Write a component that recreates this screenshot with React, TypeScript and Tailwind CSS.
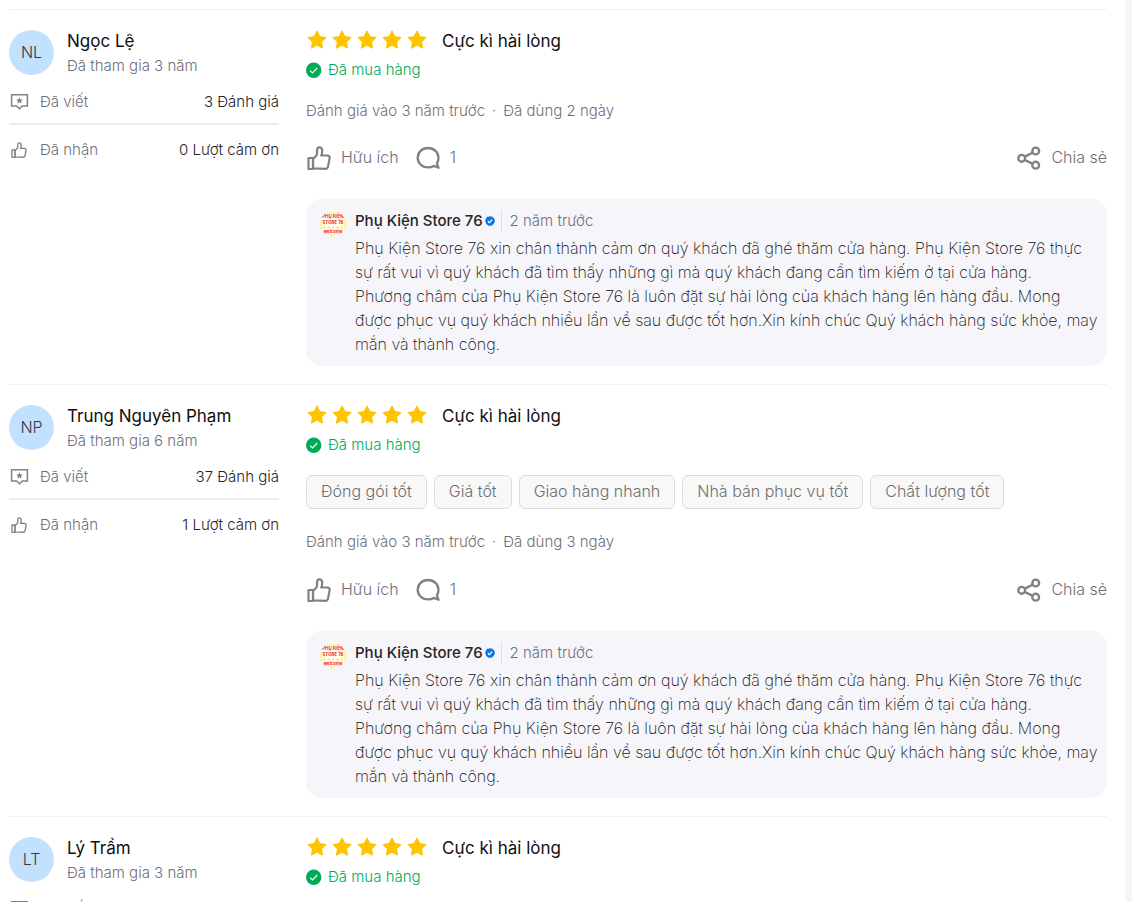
import React from 'react';

interface Review {
  initials: string;
  name: string;
  joined: string;
  written?: string;
  received?: string;
  used?: string;
  tags?: string[];
}

const reviews: Review[] = [
  {
    initials: 'NL',
    name: 'Ngọc Lệ',
    joined: 'Đã tham gia 3 năm',
    written: '3 Đánh giá',
    received: '0 Lượt cảm ơn',
    used: 'Đã dùng 2 ngày',
  },
  {
    initials: 'NP',
    name: 'Trung Nguyên Phạm',
    joined: 'Đã tham gia 6 năm',
    written: '37 Đánh giá',
    received: '1 Lượt cảm ơn',
    used: 'Đã dùng 3 ngày',
    tags: ['Đóng gói tốt', 'Giá tốt', 'Giao hàng nhanh', 'Nhà bán phục vụ tốt', 'Chất lượng tốt'],
  },
  {
    initials: 'LT',
    name: 'Lý Trầm',
    joined: 'Đã tham gia 3 năm',
  },
];

const replyText =
  'Phụ Kiện Store 76 xin chân thành cảm ơn quý khách đã ghé thăm cửa hàng. Phụ Kiện Store 76 thực sự rất vui vì quý khách đã tìm thấy những gì mà quý khách đang cần tìm kiếm ở tại cửa hàng.\nPhương châm của Phụ Kiện Store 76 là luôn đặt sự hài lòng của khách hàng lên hàng đầu. Mong được phục vụ quý khách nhiều lần về sau được tốt hơn.Xin kính chúc Quý khách hàng sức khỏe, may mắn và thành công.';

const StarIcon = () => (
  <svg viewBox="0 0 22 22" className="h-[22px] w-[22px]" aria-hidden="true">
    <path
      d="M11 1.2l2.7 5.6 6 .8-4.4 4.2 1.1 6.1L11 15l-5.4 2.9 1.1-6.1-4.4-4.2 6-.8z"
      fill="#ffc400"
      stroke="#ffc400"
      strokeWidth="1.4"
      strokeLinejoin="round"
    />
  </svg>
);

const ThumbIcon = ({ className, strokeWidth }: { className: string; strokeWidth: number }) => (
  <svg
    viewBox="0 0 24 24"
    className={className}
    fill="none"
    stroke="#808089"
    strokeWidth={strokeWidth}
    strokeLinejoin="round"
    aria-hidden="true"
  >
    <path d="M1.5 12H6v11H1.5z" />
    <path d="M6 13l3.2-3.3c.6-.7.9-1.6.9-2.6V4.1C10.1 2.4 11 1.4 12.4 1.4c1.8 0 2.8 1.4 2.8 3.5 0 1.6-.3 3.1-.9 4.6h6.1c1.6 0 2.5 1.1 2.2 2.6l-1.5 8.3c-.3 1.6-1.3 2.5-2.9 2.5L6 22.4z" />
  </svg>
);

const WrittenIcon = () => (
  <svg viewBox="0 0 20 20" className="h-5 w-5" fill="none" aria-hidden="true">
    <path d="M2.6 2.8h15.8V14h-5l-2.9 2.8L7.6 14h-5z" stroke="#808089" strokeWidth="1.5" />
    <path d="M10.5 5.3l1 2.1 2.3.2-1.7 1.6.5 2.3-2.1-1.2-2.1 1.2.5-2.3-1.7-1.6 2.3-.2z" fill="#808089" />
  </svg>
);

const CommentIcon = () => (
  <svg viewBox="0 0 24 24" className="h-6 w-6" fill="none" aria-hidden="true">
    <path
      d="M12 2C5.9 2 1.7 6.4 1.7 11.7S5.9 21.4 12 21.4c2.3 0 4.3-.5 5.9-1.5l4.7 1.9-1.7-4.4c1-1.6 1.6-3.5 1.6-5.7C22.5 6.4 18.1 2 12 2z"
      stroke="#808089"
      strokeWidth="2.3"
      strokeLinejoin="round"
    />
  </svg>
);

const ShareIcon = () => (
  <svg viewBox="0 0 24 24" className="h-6 w-6" fill="none" stroke="#808089" strokeWidth="2.4" aria-hidden="true">
    <circle cx="4.7" cy="12.3" r="3.4" />
    <circle cx="18.7" cy="5" r="3.4" />
    <circle cx="18.7" cy="19.2" r="3.4" />
    <path d="M7.9 10.6l7.6-3.9M7.9 14l7.6 3.6" />
  </svg>
);

const PurchasedIcon = () => (
  <svg viewBox="0 0 16 16" className="h-4 w-4" fill="none" aria-hidden="true">
    <circle cx="7.7" cy="8.3" r="7.7" fill="#00ab56" />
    <path d="M4 8.6l2.5 2.3L11.2 6" stroke="#fff" strokeWidth="1.1" />
  </svg>
);

const VerifiedIcon = () => (
  <svg viewBox="0 0 12 12" className="h-3 w-3" fill="none" aria-hidden="true">
    <path
      d="M6 1.1l1.3.6h1.5l.7 1.3 1.2.9-.2 1.5.6 1.2-1 1.2-.3 1.5-1.4.5-1 1.1-1.4-.3-1.4.3-1-1.1-1.4-.5-.3-1.5-.7-1.2.3-1.2-.2-1.5 1.2-.9.7-1.3h1.5z"
      fill="#0d74e7"
    />
    <path d="M3.9 6.2l1.5 1.4 2.7-3" stroke="#fff" strokeWidth="1.3" />
  </svg>
);

const StoreLogo = () => (
  <svg viewBox="0 0 26 26" className="h-[26px] w-[26px] shrink-0 rounded-full" role="img" aria-label="Phụ Kiện Store 76">
    <circle cx="13" cy="13" r="13" fill="#fff" />
    <path d="M1 2h24v20.5h-9.5l-4 3-.5-3H1z" fill="#fffef4" stroke="#fff04a" strokeWidth="1.2" />
    <g fill="#ee1c2e" fontFamily="Inter, sans-serif" fontWeight="700" textAnchor="middle">
      <text x="13" y="6.5" fontSize="4.6">PHỤ KIỆN</text>
      <text x="13" y="12.6" fontSize="4.4">STORE 76</text>
      <text x="13" y="22" fontSize="4.3">welcome</text>
    </g>
    <path
      d="M3 16.5h2M7.5 16.5h2M12 16.5h2M16.5 16.5h2M21 16.5h2"
      stroke="#ffe93a"
      strokeWidth="2"
    />
  </svg>
);

const Reviewer = ({ review }: { review: Review }) => (
  <div className="w-[270px] shrink-0">
    <div className="flex gap-[13px]">
      <div className="flex h-[45px] w-[45px] shrink-0 items-center justify-center rounded-full bg-[#c2e1ff] pb-px text-base font-light text-[#38383d]">
        {review.initials}
      </div>
      <div>
        <div className="text-[17px] leading-[22px] text-[#0f0f0f]">{review.name}</div>
        <div className="mt-1 text-[15px] leading-5 font-light text-[#6f6f78]">{review.joined}</div>
      </div>
    </div>
    <div className="mt-[14px] flex h-6 items-center text-[15px] font-light text-[#6f6f78]">
      <WrittenIcon />
      <span className="ml-[11px]">Đã viết</span>
      <span className="ml-auto text-[#242424]">{review.written}</span>
    </div>
    {review.received && (
      <>
        <div className="mt-[9px] h-[2px] bg-[#ebebf0]" />
        <div className="mt-[13px] flex h-6 items-center text-[15px] font-light text-[#6f6f78]">
          <ThumbIcon className="mx-[2px] h-4 w-4" strokeWidth={2} />
          <span className="ml-[11px]">Đã nhận</span>
          <span className="ml-auto text-[#242424]">{review.received}</span>
        </div>
      </>
    )}
  </div>
);

const StoreReply = () => (
  <div className="mt-[27px] flex gap-[9px] rounded-2xl bg-[#f5f5fa] pt-[10px] pr-2 pb-[10px] pl-[14px]">
    <div className="pt-[2px]">
      <StoreLogo />
    </div>
    <div className="min-w-0 flex-1">
      <div className="flex h-6 items-center">
        <span className="text-[15px] font-medium text-[#242424]">Phụ Kiện Store 76</span>
        <span className="ml-px">
          <VerifiedIcon />
        </span>
        <span className="ml-[5px] border-l border-[#dddde3] pl-2 text-[15px] leading-[22px] font-light text-[#6f6f78]">
          2 năm trước
        </span>
      </div>
      <p className="mt-[3px] text-base leading-6 font-extralight whitespace-pre-line text-[#0f0f0f]">{replyText}</p>
    </div>
  </div>
);

const ReviewItem = ({ review }: { review: Review }) => (
  <article className="flex gap-[27px] border-t border-[#f0f0f2] pt-5 pb-[18px] last:pb-0">
    <Reviewer review={review} />
    <div className="min-w-0 flex-1">
      <div className="flex h-6 items-start">
        <div className="flex gap-[3px]" role="img" aria-label="5 sao">
          {[1, 2, 3, 4, 5].map((n) => (
            <StarIcon key={n} />
          ))}
        </div>
        <span className="ml-[14px] text-[17px] leading-[23px] text-[#0f0f0f]">Cực kì hài lòng</span>
      </div>
      <div className="mt-[5px] flex h-[22px] items-center gap-[6px] text-[15px] font-light text-[#00ab56]">
        <PurchasedIcon />
        Đã mua hàng
      </div>
      {review.tags && (
        <div className="mt-[19px] mb-[21px] flex flex-wrap gap-[7px]">
          {review.tags.map((tag) => (
            <span
              key={tag}
              className="flex h-[34px] items-center rounded-md border border-[#dddddd] bg-[#f8f8f8] px-[14px] pb-[2px] text-base font-light text-[#6f6f6f]"
            >
              {tag}
            </span>
          ))}
        </div>
      )}
      {review.used && (
        <>
          <div className={review.tags ? 'mb-[22px]' : 'mt-[18px] mb-[21px]'}>
            <p className="text-[15px] leading-6 font-light text-[#6f6f78]">
              Đánh giá vào 3 năm trước<span className="mx-[7px]">·</span>
              {review.used}
            </p>
          </div>
          <div className="flex h-7 items-center text-base font-light text-[#6f6f78]">
            <button type="button" className="flex items-center gap-[10px]">
              <ThumbIcon className="ml-px h-6 w-6" strokeWidth={2.2} />
              <span className="pb-[2px]">Hữu ích</span>
            </button>
            <button type="button" className="ml-[17px] flex items-center gap-[10px]">
              <CommentIcon />
              <span className="pb-[2px]">1</span>
            </button>
            <button type="button" className="ml-auto flex items-center gap-[10px]">
              <ShareIcon />
              <span className="pb-[2px]">Chia sẻ</span>
            </button>
          </div>
          <StoreReply />
        </>
      )}
    </div>
  </article>
);

export default function App() {
  return (
    <div className="min-h-screen bg-[#f5f5fa] pr-[7px] font-['Inter','Noto_Sans',sans-serif]">
      <main className="min-h-screen bg-white pt-[9px] pr-[18px] pl-[9px]">
        {reviews.map((review) => (
          <ReviewItem key={review.name} review={review} />
        ))}
      </main>
    </div>
  );
}
